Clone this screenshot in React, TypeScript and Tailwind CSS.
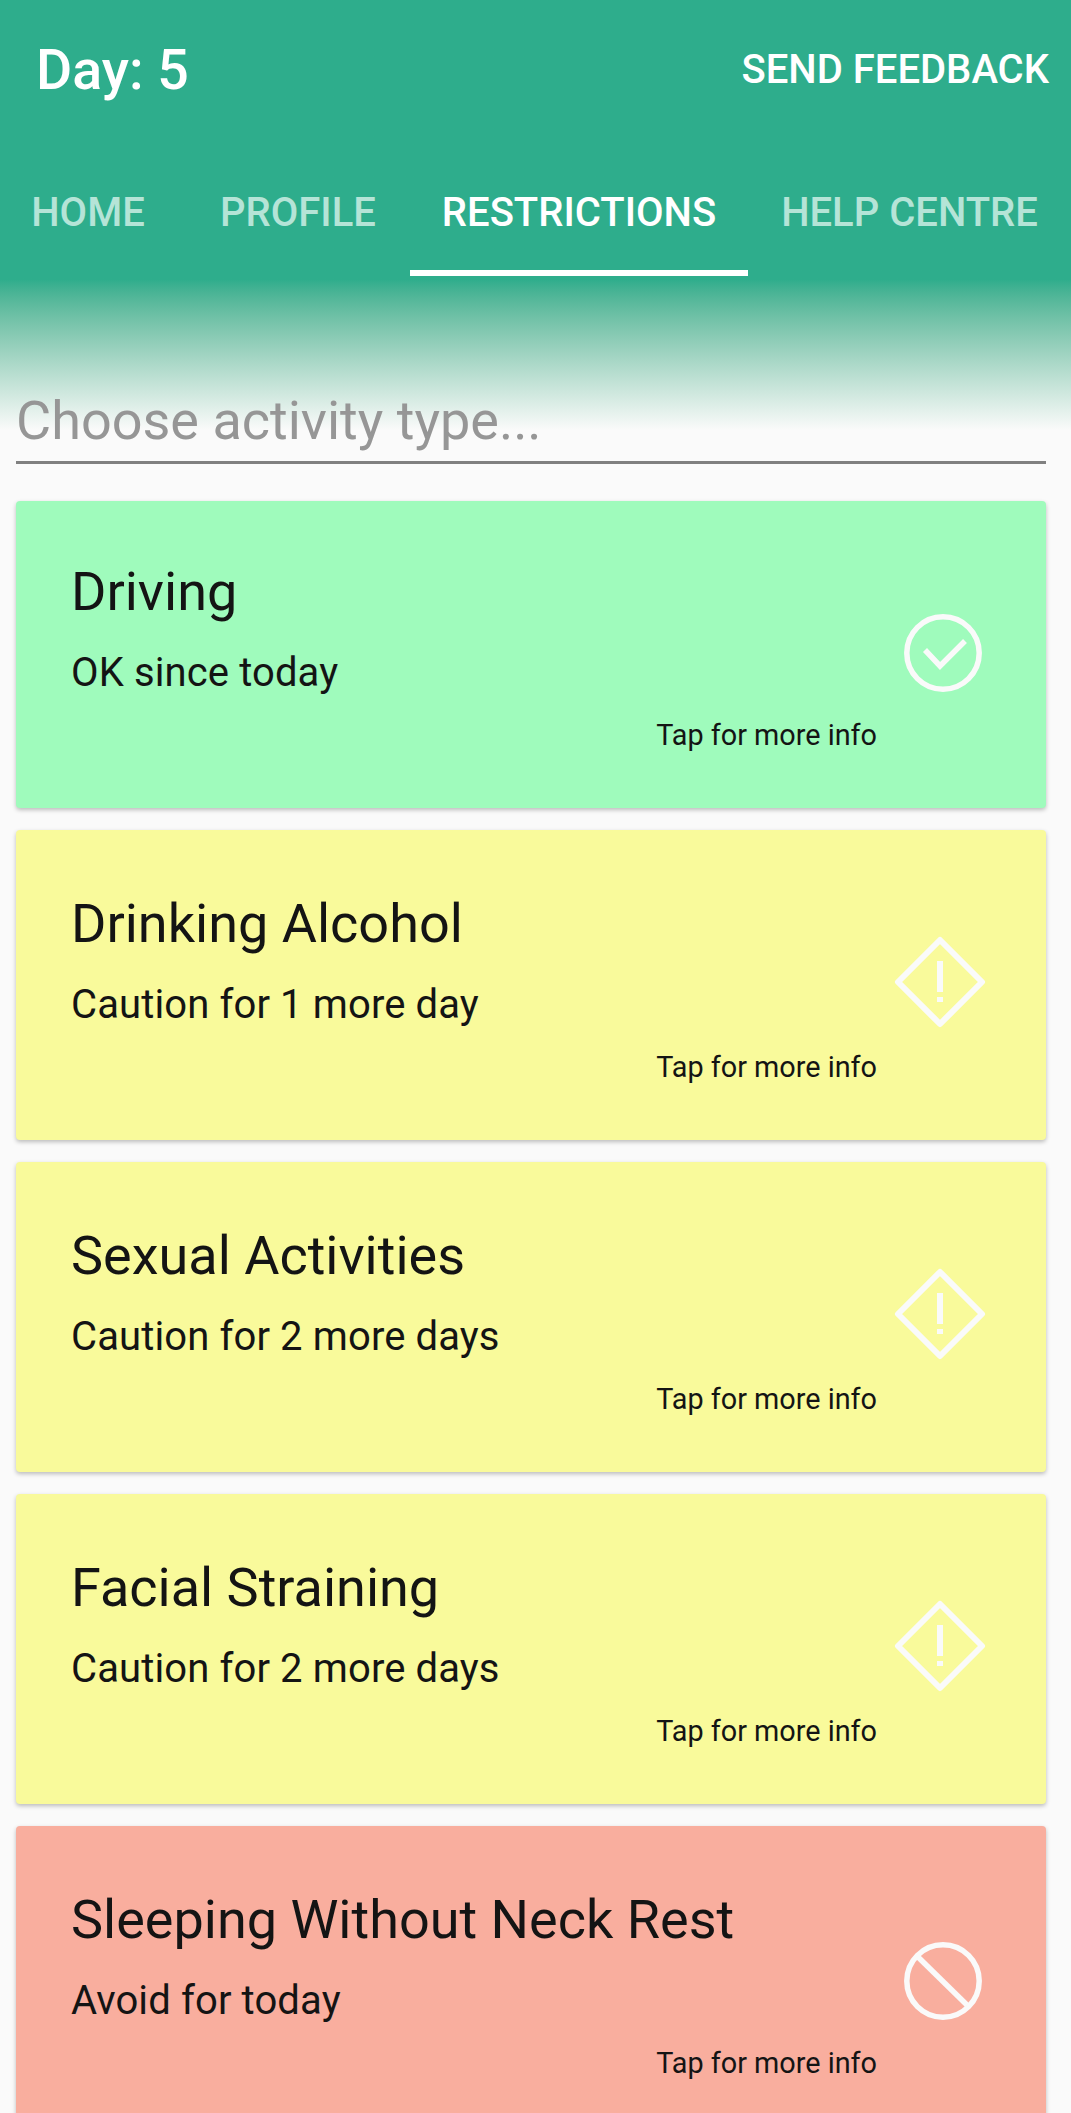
const font = { fontFamily: "Roboto, sans-serif" };

type Status = "ok" | "caution" | "avoid";

const items: { title: string; note: string; status: Status }[] = [
  { title: "Driving", note: "OK since today", status: "ok" },
  { title: "Drinking Alcohol", note: "Caution for 1 more day", status: "caution" },
  { title: "Sexual Activities", note: "Caution for 2 more days", status: "caution" },
  { title: "Facial Straining", note: "Caution for 2 more days", status: "caution" },
  { title: "Sleeping Without Neck Rest", note: "Avoid for today", status: "avoid" },
];

function StatusIcon({ status }: { status: Status }) {
  if (status === "caution") {
    return (
      <svg width="92" height="92" viewBox="0 0 92 92" fill="none" stroke="#fafafa" strokeWidth="6" className="mt-[-6px] ml-[-2px] shrink-0">
        <path d="M46 4 L88 46 L46 88 L4 46 Z" strokeLinejoin="round" />
        <path d="M46 25 V56" />
        <path d="M46 61 V66" />
      </svg>
    );
  }
  return (
    <svg width="78" height="78" viewBox="0 0 78 78" fill="none" stroke="#fafafa" strokeWidth="5.5" className="ml-[4px] shrink-0">
      <circle cx="39" cy="39" r="36.2" />
      {status === "ok" ? <path d="M21 36 L36 52 L61 27" /> : <path d="M14 15 L63 63" />}
    </svg>
  );
}

function Card({ title, note, status }: { title: string; note: string; status: Status }) {
  const bg = status === "ok" ? "bg-[#9ffbbc]" : status === "caution" ? "bg-[#f9fa9b]" : "bg-[#f9ae9e]";
  const height = status === "ok" ? "h-[307px] pt-[61px]" : "h-[310px] pt-[64px]";
  return (
    <div className={`${bg} ${height} shrink-0 rounded-[4px] shadow-[0_2px_4px_rgba(0,0,0,0.25)] flex pl-[55px] pr-[60px] text-[#141414]`}>
      <div className="flex-1 flex flex-col">
        <div className="text-[54px] leading-[60px]">{title}</div>
        <div className="text-[40px] leading-[44px] mt-[29px] tracking-[0.12px]">{note}</div>
        <div className="text-[28.8px] leading-[34px] mt-[23px] self-end mr-[19px]">Tap for more info</div>
      </div>
      <div className="w-[90px] mt-[-64px] flex items-center justify-center">
        <StatusIcon status={status} />
      </div>
    </div>
  );
}

export default function App() {
  return (
    <div style={font} className="w-[1071px] h-[2113px] overflow-hidden bg-[#fafafa]">
      <div className="h-[430px] bg-gradient-to-b from-[#2ead8c] from-[65%] to-[#fafafa]">
        <div className="h-[103px] flex justify-between pl-[36px] pr-[22px] pt-[37px]">
          <div className="text-[55.5px] leading-[66px] mt-[1px] font-medium text-white">Day: 5</div>
          <div className="text-[40px] leading-[66px] font-medium text-white">SEND FEEDBACK</div>
        </div>
        <div className="flex h-[173px] pt-[71px] text-[40px] leading-[66px] font-medium">
          <div className="w-[176px] pt-[6px] text-center text-[#b5e4d7]">HOME</div>
          <div className="w-[234px] pt-[6px] pl-[10px] text-center text-[#b5e4d7]">PROFILE</div>
          <div className="w-[338px] pt-[6px] text-center text-white border-b-[6px] border-white h-[102px]">RESTRICTIONS</div>
          <div className="flex-1 pt-[6px] text-center text-[#b5e4d7]">HELP CENTRE</div>
        </div>
      </div>
      <div className="ml-[16px] mr-[25px] mt-[-43px] h-[77px] pt-[4px] border-b-[3px] border-[#808080] text-[54px] leading-[60px] text-[#969696] relative">
        Choose activity type...
      </div>
      <div className="ml-[16px] mr-[25px] mt-[37px] flex flex-col gap-[22px]">
        {items.map((item) => (
          <Card key={item.title} {...item} />
        ))}
      </div>
    </div>
  );
}
